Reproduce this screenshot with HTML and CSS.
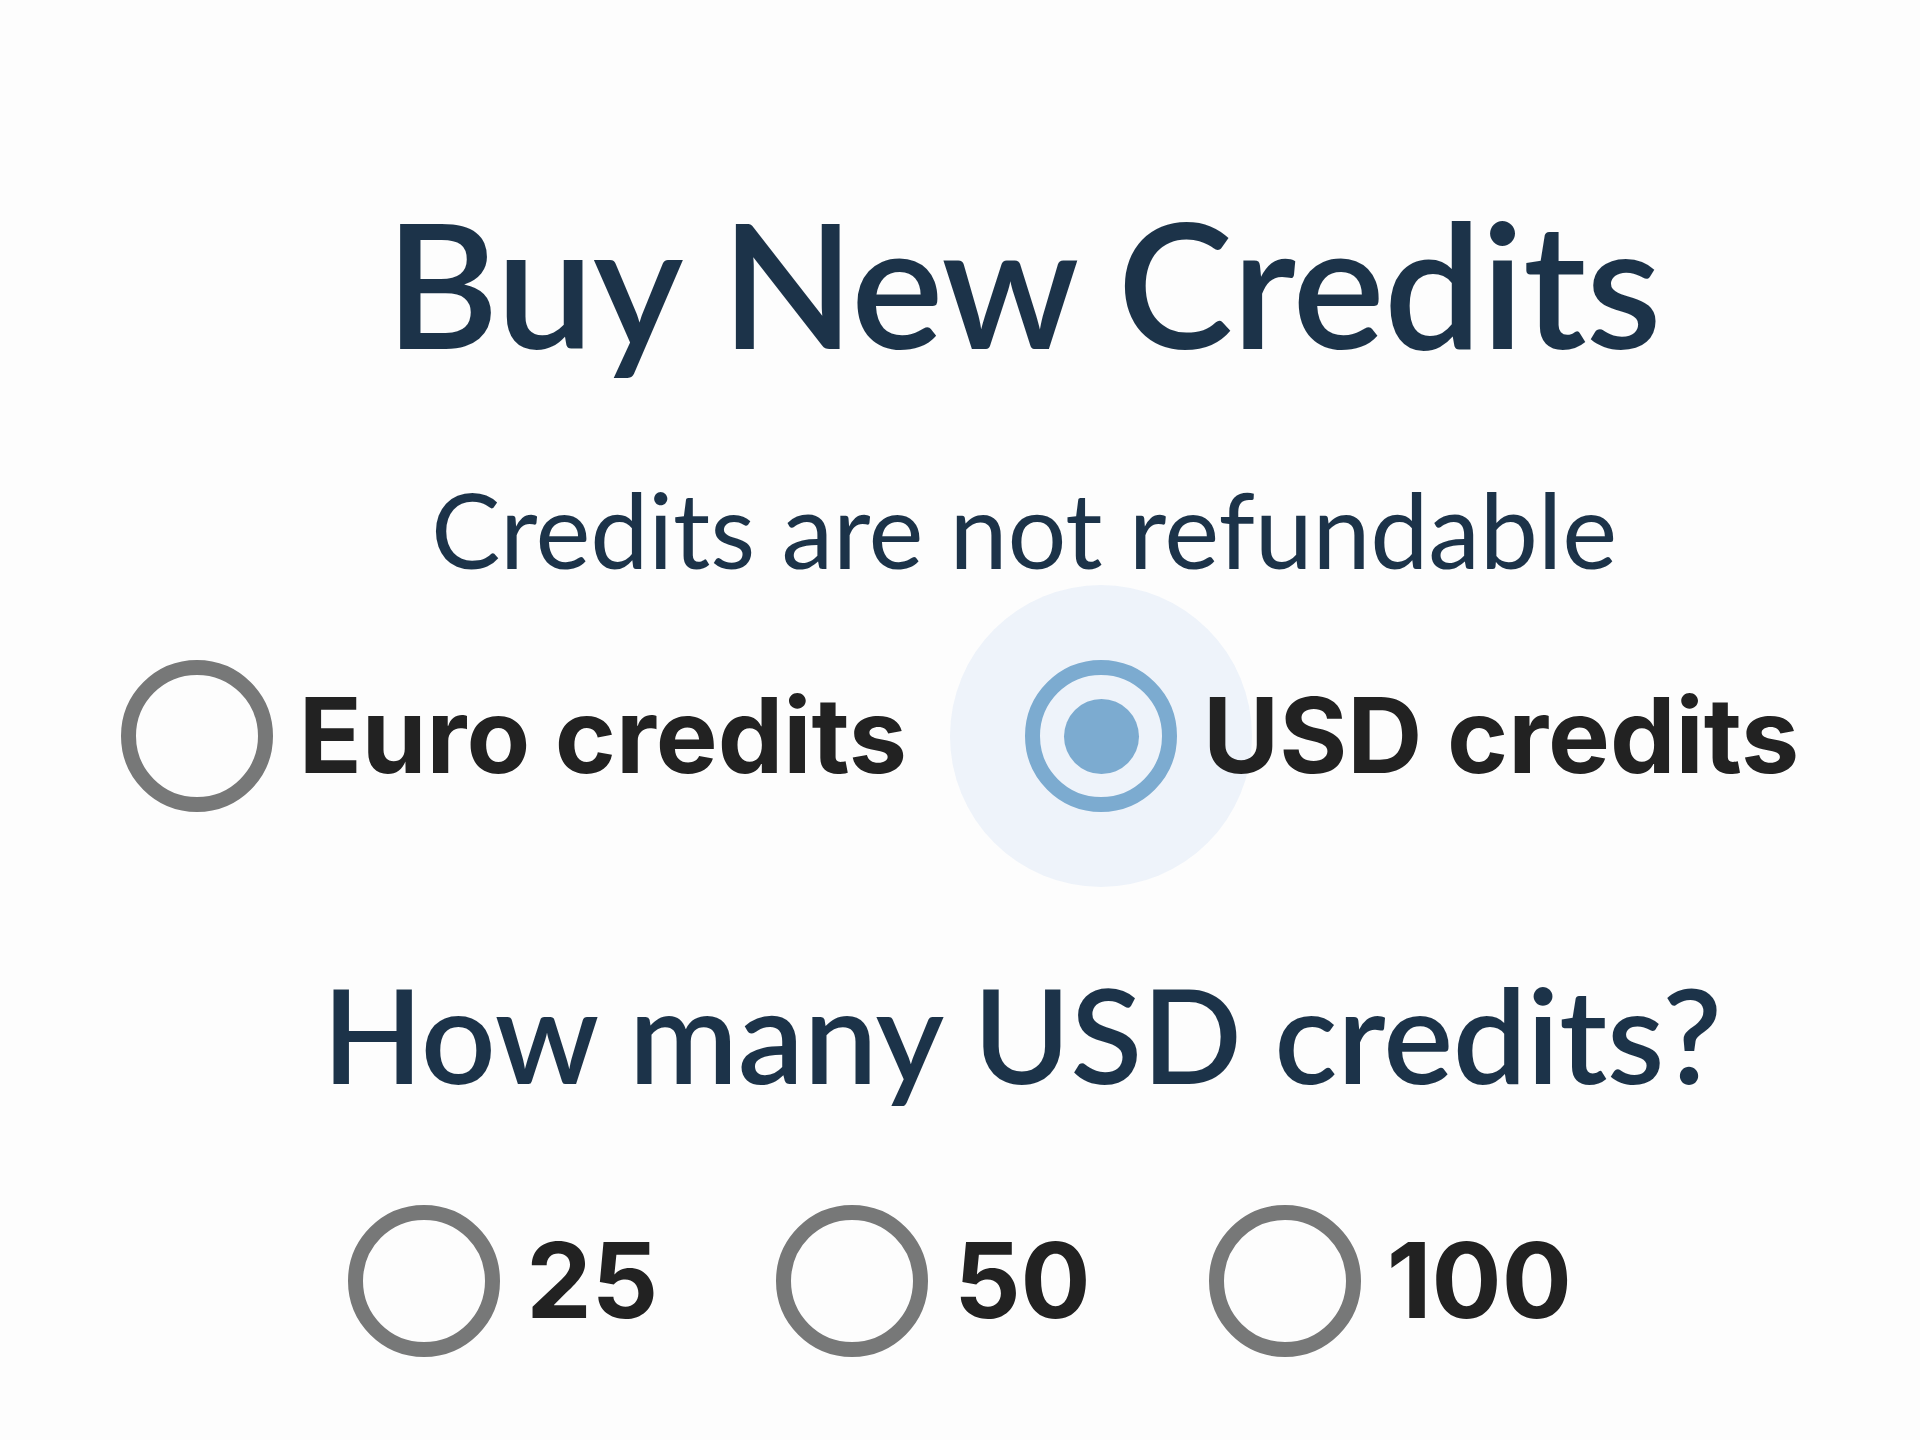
FILE: index.html
```html
<!DOCTYPE html>
<html lang="en">
<head>
<meta charset="utf-8">
<title>Buy New Credits</title>
<link rel="stylesheet" href="styles.css">
</head>
<body>
<main class="page">
  <h1 class="title">Buy New Credits</h1>
  <p class="subtitle">Credits are not refundable</p>

  <div class="radio-group currency" role="radiogroup">
    <label class="option">
      <span class="radio"></span>
      <span class="option-text">Euro credits</span>
    </label>
    <label class="option">
      <span class="radio radio-checked"></span>
      <span class="option-text">USD credits</span>
    </label>
  </div>

  <h2 class="question">How many USD credits?</h2>

  <div class="radio-group amounts" role="radiogroup">
    <label class="option">
      <span class="radio"></span>
      <span class="option-text">25</span>
    </label>
    <label class="option">
      <span class="radio"></span>
      <span class="option-text">50</span>
    </label>
    <label class="option">
      <span class="radio"></span>
      <span class="option-text">100</span>
    </label>
  </div>
</main>
</body>
</html>
```
FILE: styles.css
```css
html, body {
  margin: 0;
  padding: 0;
  background: #fdfdfd;
}

.page {
  width: 1920px;
  padding-top: 177px;
  display: flex;
  flex-direction: column;
  align-items: stretch;
  font-family: "Lato", "Noto Sans", sans-serif;
  color: #1c3349;
}

.title {
  margin: 0;
  padding-left: 126px;
  text-align: center;
  font-size: 174px;
  line-height: 209px;
  font-weight: 600;
  letter-spacing: -0.9px;
}

.subtitle {
  margin: 80px 0 0;
  padding-left: 128px;
  text-align: center;
  font-size: 104px;
  line-height: 125px;
  font-weight: 400;
  letter-spacing: -0.2px;
}

.radio-group {
  display: flex;
  justify-content: center;
  align-items: center;
  gap: 118px;
}

.currency {
  margin-top: 69px;
}

.amounts {
  margin-top: 93px;
}

.question {
  margin: 142px 0 0;
  padding-left: 124px;
  text-align: center;
  font-size: 131.5px;
  line-height: 158px;
  font-weight: 600;
  letter-spacing: -0.2px;
}

.option {
  position: relative;
  z-index: 0;
  display: flex;
  align-items: center;
  cursor: pointer;
}

.radio {
  position: relative;
  flex: none;
  width: 152px;
  height: 152px;
  box-sizing: border-box;
  border: 15px solid #777878;
  border-radius: 50%;
}

.radio-checked {
  border-color: #7cabd0;
}

.radio-checked::before {
  content: "";
  position: absolute;
  left: 50%;
  top: 50%;
  width: 302px;
  height: 302px;
  margin: -151px 0 0 -151px;
  border-radius: 50%;
  background: #eef3fa;
  z-index: -1;
}

.radio-checked::after {
  content: "";
  position: absolute;
  left: 50%;
  top: 50%;
  width: 75px;
  height: 75px;
  margin: -37.5px 0 0 -37.5px;
  border-radius: 50%;
  background: #7cabd0;
}

.option-text {
  margin-left: 26px;
  font-family: "Inter", "Noto Sans", sans-serif;
  font-weight: 700;
  font-size: 104px;
  line-height: 1.21;
  color: #222222;
}
```
